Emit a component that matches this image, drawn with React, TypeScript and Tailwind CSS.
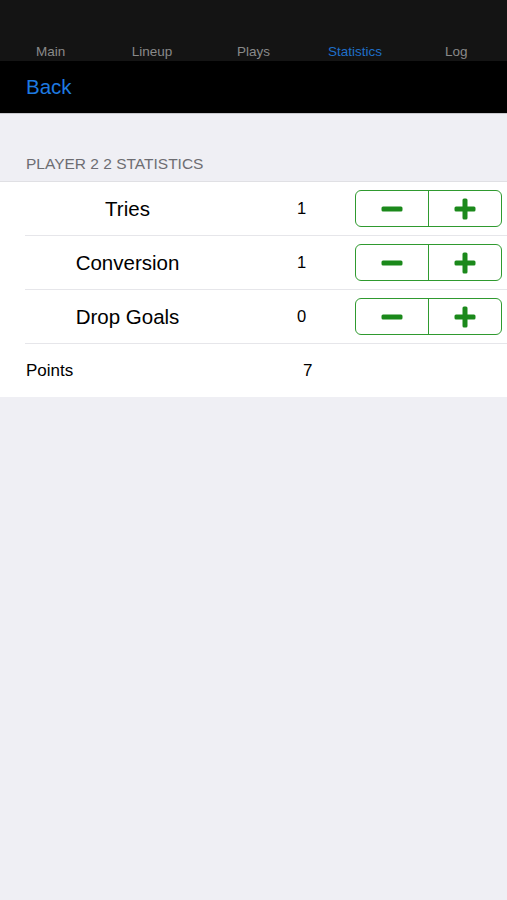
import React from "react";

const font = { fontFamily: '"Helvetica Neue", "Liberation Sans", Arial, sans-serif' };

function Stepper() {
  return (
    <div className="flex h-[37px] w-[147px] shrink-0 overflow-hidden rounded-[6px] border border-[#2f9a2f]">
      <div className="flex flex-1 items-center justify-center border-r border-[#2f9a2f]">
        <svg width="22" height="6" viewBox="0 0 22 6">
          <rect x="0.5" y="0.5" width="21" height="5" rx="1.5" fill="#1b891b" />
        </svg>
      </div>
      <div className="flex flex-1 items-center justify-center">
        <svg width="22" height="22" viewBox="0 0 22 22">
          <rect x="0.5" y="8.5" width="21" height="5" rx="1.5" fill="#1b891b" />
          <rect x="8.5" y="0.5" width="5" height="21" rx="1.5" fill="#1b891b" />
        </svg>
      </div>
    </div>
  );
}

function StatRow({ label, value }: { label: string; value: string }) {
  return (
    <div className="pl-[25px]">
      <div className="flex h-[54px] items-center border-b border-[#e6e6ea]">
        <div className="w-[205px] shrink-0 pt-[1px] text-center text-[20.5px] text-black">{label}</div>
        <div className="w-[125px] shrink-0 pl-[18px] text-center text-[16.5px] text-black">{value}</div>
        <Stepper />
      </div>
    </div>
  );
}

export default function App() {
  const tabs = ["Main", "Lineup", "Plays", "Statistics", "Log"];
  return (
    <div className="flex min-h-[900px] w-[507px] flex-col bg-[#efeff4]" style={font}>
      <div className="flex h-[61px] items-end bg-[#141414] pb-[1px]">
        {tabs.map((t) => (
          <div
            key={t}
            className={`flex-1 text-center text-[13.5px] leading-[16px] ${t === "Statistics" ? "text-[#1f6fc8]" : "text-[#8a8a8a]"}`}
          >
            {t}
          </div>
        ))}
      </div>
      <div className="flex h-[53px] items-center border-b border-[#c8c8cc] bg-black px-[26px]">
        <span className="text-[20.5px] text-[#1e7ae0]">Back</span>
      </div>
      <div className="h-[67px] px-[26px] pt-[40px] text-[15.5px] leading-[20px] text-[#6d6d72]">
        PLAYER 2 2 STATISTICS
      </div>
      <div className="border-t border-[#e0e0e4] bg-white">
        <StatRow label="Tries" value="1" />
        <StatRow label="Conversion" value="1" />
        <StatRow label="Drop Goals" value="0" />
        <div className="flex h-[53px] items-center pl-[26px]">
          <div className="w-[277px] text-[17px] text-black">Points</div>
          <div className="text-[17px] text-black">7</div>
        </div>
      </div>
    </div>
  );
}
